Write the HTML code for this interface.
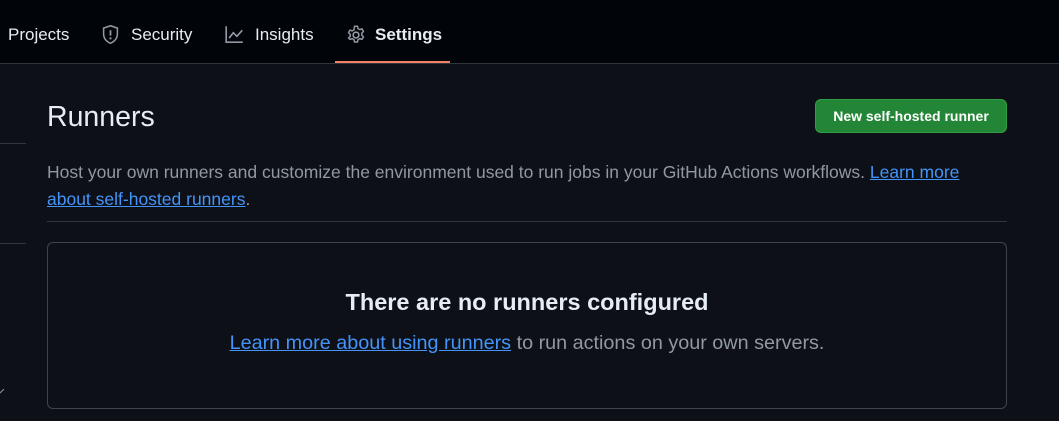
<!DOCTYPE html><html><head><style>
body{margin:0;width:1059px;height:421px;overflow:hidden;background:#0d1117;font-family:"Liberation Sans",sans-serif;color:#e6edf3;position:relative}
.hdr{position:absolute;left:0;top:0;width:1059px;height:63px;background:#010409;border-bottom:1px solid #30363d}
.tab{position:absolute;top:25px;font-size:17px;color:#e6edf3;white-space:nowrap}
.tab svg{position:absolute}
.ul{position:absolute;left:335px;top:61px;width:115px;height:2px;background:#f78166}
.sl{position:absolute;left:0;width:26px;height:1px;background:#30363d}
h1{position:absolute;left:47px;top:101px;margin:0;font-weight:normal;font-size:28.5px}
.btn{position:absolute;left:815px;top:99px;width:192px;height:34px;background:#238636;border:1px solid #2ea043;box-sizing:border-box;border-radius:6px;color:#fff;font-size:14px;font-weight:bold;text-align:center;line-height:32px}
.desc{position:absolute;left:47px;top:159px;width:960px;font-size:17.5px;line-height:27px;color:#9198a1}
a{color:#4493f8;text-decoration:underline}
.hr{position:absolute;left:47px;top:221px;width:960px;height:1px;background:#30363d}
.box{position:absolute;left:47px;top:242px;width:960px;height:167px;box-sizing:border-box;border:1px solid #3d444d;border-radius:6px;text-align:center}
.box h3{margin:46px 0 0;font-size:23.5px;font-weight:bold}
.box p{margin:16px 0 0;font-size:19.8px;color:#9198a1}
</style></head><body>
<div class="hdr">
<div class="tab" style="left:8px">Projects</div>
<div class="tab" style="left:101px"><svg width="19" height="22" viewBox="0 0 16 18" style="left:0;top:-1px"><path d="M8 1.2 2.2 3.2v4.8c0 3.8 2.5 6.5 5.8 8 3.3-1.5 5.8-4.2 5.8-8V3.2z" fill="none" stroke="#9198a1" stroke-width="1.3"/><path d="M8 5v4.5" stroke="#9198a1" stroke-width="1.5"/><circle cx="8" cy="11.8" r=".95" fill="#9198a1"/></svg><span style="margin-left:30px">Security</span></div>
<div class="tab" style="left:224px"><svg width="21" height="19" viewBox="0 0 16 16" style="left:0;top:0"><path d="M1 1v13.5h14" fill="none" stroke="#9198a1" stroke-width="1.4"/><path d="M3.5 11 7 6.5l3 3 4.5-5" fill="none" stroke="#9198a1" stroke-width="1.4"/></svg><span style="margin-left:31px">Insights</span></div>
<div class="tab" style="left:346px;font-weight:bold"><svg width="20" height="20" viewBox="0 0 16 16" style="left:0;top:0"><circle cx="8" cy="8" r="2.3" fill="none" stroke="#9198a1" stroke-width="1.3"/><path d="M6.8 1h2.4l.4 1.9 1.4.8 1.8-.6 1.2 2.1-1.4 1.3v1.6l1.4 1.3-1.2 2.1-1.8-.6-1.4.8-.4 1.9H6.8l-.4-1.9-1.4-.8-1.8.6L2 10.4l1.4-1.3V7.5L2 6.2l1.2-2.1 1.8.6 1.4-.8z" fill="none" stroke="#9198a1" stroke-width="1.2" stroke-linejoin="round"/></svg><span style="margin-left:29px">Settings</span></div>
</div>
<div class="ul"></div>
<div class="sl" style="top:143px"></div>
<div class="sl" style="top:243px"></div>
<svg width="6" height="6" style="position:absolute;left:0;top:389px"><path d="M0 4 2 2 4 0" fill="none" stroke="#9198a1" stroke-width="1"/></svg>
<h1>Runners</h1>
<div class="btn">New self-hosted runner</div>
<div class="desc">Host your own runners and customize the environment used to run jobs in your GitHub Actions workflows. <a>Learn more about self-hosted runners</a>.</div>
<div class="hr"></div>
<div class="box"><h3>There are no runners configured</h3><p><a>Learn more about using runners</a> to run actions on your own servers.</p></div>
</body></html>
